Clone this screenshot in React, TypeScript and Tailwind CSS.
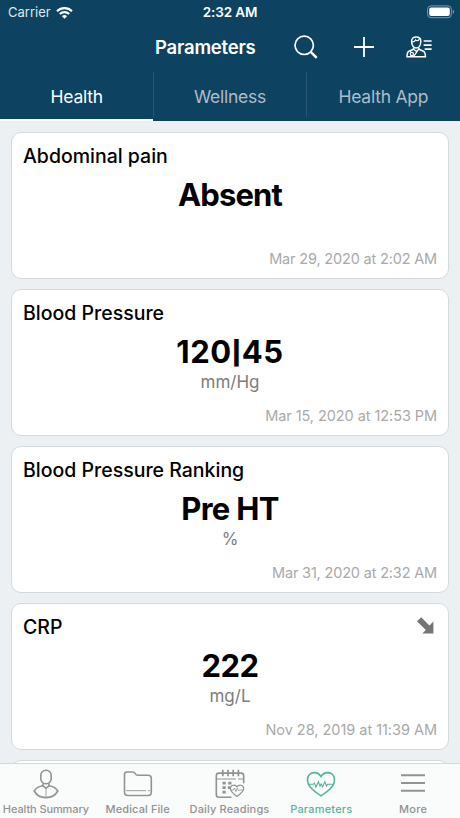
import clsx from "clsx"
import type { ReactNode } from "react"

type Reading = {
    title: string
    value: ReactNode
    unit?: string
    date: string
    falling?: boolean
    valueClass: string
    dateClass: string
}

const READINGS: Reading[] = [
    {
        title: "Abdominal pain", value: "Absent", date: "Mar 29, 2020 at 2:02 AM",
        valueClass: "tracking-[-0.9px]", dateClass: "tracking-[-0.17px]",
    },
    {
        title: "Blood Pressure", value: <>120<span className="relative -top-[2px] text-[23px] font-black">|</span>45</>, unit: "mm/Hg", date: "Mar 15, 2020 at 12:53 PM",
        valueClass: "tracking-[0.6px]", dateClass: "tracking-[-0.07px]",
    },
    {
        title: "Blood Pressure Ranking", value: "Pre HT", unit: "%", date: "Mar 31, 2020 at 2:32 AM",
        valueClass: "tracking-[-0.7px]", dateClass: "tracking-[-0.17px]",
    },
    {
        title: "CRP", value: "222", unit: "mg/L", date: "Nov 28, 2019 at 11:39 AM", falling: true,
        valueClass: "tracking-[-0.5px]", dateClass: "tracking-[-0.03px]",
    },
]

function WifiIcon() {
    return (
        <svg width="17" height="12" viewBox="0 0 17 12" fill="none" stroke="currentColor" strokeWidth="2.1">
            <path d="M1 4.2a10.6 10.6 0 0 1 15 0" />
            <path d="M3.8 7.1a6.7 6.7 0 0 1 9.4 0" />
            <path d="M8.5 11.8 5.9 9.3a3.7 3.7 0 0 1 5.2 0z" fill="currentColor" stroke="none" />
        </svg>
    )
}

function BatteryIcon() {
    return (
        <svg width="28" height="14" viewBox="0 0 28 14" fill="none">
            <rect x="0.6" y="0.9" width="23.8" height="11.8" rx="3.4" stroke="#7b9aaf" strokeWidth="1" />
            <rect x="2.2" y="2.5" width="20.6" height="8.6" rx="2" fill="#fff" />
            <path d="M25.8 4.8v4q1.4-.6 1.4-2t-1.4-2z" fill="#7b9aaf" />
        </svg>
    )
}

function SearchIcon() {
    return (
        <svg width="24" height="24" viewBox="0 0 24 24" fill="none" stroke="currentColor">
            <circle cx="10.2" cy="10.3" r="9.2" strokeWidth="1.7" />
            <path d="m16.5 16.7 6.2 6.1" strokeWidth="2.4" />
        </svg>
    )
}

function PlusIcon() {
    return (
        <svg width="20" height="20" viewBox="0 0 20 20" fill="none" stroke="currentColor" strokeWidth="1.8">
            <path d="M10 0v20M0 10h20" />
        </svg>
    )
}

function DoctorIcon() {
    return (
        <svg width="26" height="22" viewBox="0 0 26 22" fill="none" stroke="currentColor" strokeWidth="1.5">
            <path d="M5.6 5.2C5.600 2.300 7.500.9 10.200.9s4.600 1.600 4.600 4.300c0 3.900-1.900 6.900-4.600 6.900S5.600 9.100 5.600 5.200z" />
            <path d="M6 5.800c2.200.1 3-.7 3.500-1.900 1.100 1.300 3 1.100 3.700-.9" strokeWidth="1.2" />
            <path d="M7.500 11.800v1.500L3 15.200C1.500 16 1 17.800 1 20.800h18.400c0-3-.5-4.800-2-5.600l-4.500-1.900v-1.500" />
            <path d="m7.800 13.200 2.500 2.200 2.400-2.200M12.600 13.400 7.700 20.400M4.700 15v1.600" strokeWidth="1.2" />
            <circle cx="5.900" cy="18" r="1.600" strokeWidth="1.200" />
            <path d="M17.600 5h8M17.600 9.100h8M18.700 13.200h6.900" strokeWidth="1.700" />
        </svg>
    )
}

function FallingArrow() {
    return (
        <svg width="17" height="17" viewBox="0 0 17 17" className="fill-[#757575]">
            <path d="M0 4.200 4.200.2l8.200 8.200 4-3.800v12H5.300l3.500-3.700z" />
        </svg>
    )
}

function PersonIcon() {
    return (
        <svg width="26" height="30" viewBox="0 0 26 30" fill="none" stroke="currentColor" strokeWidth="1.6">
            <rect x="7.800" y="1.300" width="10.400" height="13.400" rx="5" />
            <path d="M10 14.500v2.300c-3.800.5-7 2.400-8.800 5.200 2.300 4.200 6.700 6.600 11.800 6.600s9.500-2.400 11.800-6.600c-1.800-2.800-5-4.700-8.800-5.200v-2.300" />
            <path d="m9.800 16.700 3.200 2.600 3.200-2.600" />
            <path d="M13 19.300v9" strokeWidth=".8" />
        </svg>
    )
}

function FolderIcon() {
    return (
        <svg width="30" height="28" viewBox="0 0 30 28" fill="none" stroke="currentColor" strokeWidth="1.6">
            <path d="M1.500 4.500c0-1.500.8-2.500 2.500-2.500h6c2.500 0 2 3.300 4.500 3.300H25c2.300 0 3.300 1 3.300 3V22c0 2.500-1 3.500-3.300 3.500H4.800c-2.300 0-3.300-1-3.300-3.500z" />
            <path d="M3 20.700h20M24.800 20.700h2" strokeWidth=".9" />
        </svg>
    )
}

function CalendarIcon() {
    return (
        <svg width="30" height="30" viewBox="0 0 30 30" fill="none" stroke="currentColor" strokeWidth="1.6" className="ml-px">
            <path d="M16.500 28.200H4c-1.800 0-2.700-.9-2.700-2.700V6.700C1.300 5 2.200 4.100 4 4.100h22c1.800 0 2.700.9 2.700 2.600v7.500" />
            <path d="M1.300 10H21M23 10h5.500" strokeWidth="1.200" />
            <path d="M7.800.8v6.500M13 .8v6.500M18.200.8v6.500M23.400.8v6.500" strokeWidth="1.700" />
            <path d="M7.500 14.200h3.200M13.200 14.200h3.200M7.500 18.700h3.200M12.800 18.700h2.500M7.500 23.200h3.200" strokeWidth="2.700" />
            <path d="M22 27.500c-3.800-2.700-6.700-4.900-6.700-7.900 0-3.700 4.700-4.700 6.700-1.700 2-3 6.700-2 6.700 1.700 0 3-2.900 5.200-6.700 7.900z" strokeWidth="1.200" />
            <path d="M15.500 21h3l1-2 1.300 3.700 1.500-3.700 1.300 3 1-1h3.500" strokeWidth=".8" />
        </svg>
    )
}

function HeartIcon() {
    return (
        <svg width="30" height="27" viewBox="0 0 30 27" fill="none" stroke="currentColor" strokeWidth="1.6">
            <path d="M15 24.800C8.500 20.500 1.500 15.700 1.500 8.900 1.500 4.300 4.500 1.600 8.300 1.600c3 0 5.200 1.300 6.700 4 1.500-2.700 3.700-4 6.700-4 3.800 0 6.800 2.700 6.800 7.300 0 6.800-7 11.600-13.500 15.900z" />
            <path d="M3 13.300h4.300l1.100-1.200 1.600 3.900 2.400-5.200 1.600 4.300 1.200-2.200 1.400 3 2.200-5.200 1.700 4.300 1.100-1.700h5.700" strokeWidth="1.100" />
        </svg>
    )
}

function MenuIcon() {
    return (
        <svg width="24" height="20" viewBox="0 0 24 20" fill="none" stroke="currentColor" strokeWidth="1.900" className="-mt-[3px]">
            <path d="M0 2.300h24M0 10h24M0 17.700h24" />
        </svg>
    )
}

function ReadingCard({ reading }: { reading: Reading }) {
    return (
        <article className="flex h-[147px] shrink-0 flex-col rounded-[10px] border border-[#d5d9dc] bg-white px-[11px] pt-[9px] pb-[9px]">
            <header className="flex h-7 items-center justify-between">
                <h2 className="text-[19.5px] leading-7 font-medium whitespace-nowrap text-black">{reading.title}</h2>
                {reading.falling && <span className="mr-[3px] mb-1"><FallingArrow /></span>}
            </header>
            <p className={clsx("mt-[5px] h-10 text-center text-[31px] leading-10 font-bold whitespace-nowrap text-black", reading.valueClass)}>{reading.value}</p>
            <p className="h-5 text-center text-[17px] leading-5 text-[#7d7d7d]">{reading.unit}</p>
            <time className={clsx("mt-auto text-right text-[14.5px] leading-5 whitespace-nowrap text-[#a9a9a9]", reading.dateClass)}>{reading.date}</time>
        </article>
    )
}

function NavItem({ label, labelClass, active, children }: { label: string, labelClass?: string, active?: boolean, children: ReactNode }) {
    return (
        <button className={clsx("flex flex-col items-center", active ? "text-[#55b49c]" : "text-[#929292]")}>
            <span className="flex h-[37px] items-center justify-center pt-[3px]">{children}</span>
            <span className={clsx("text-[11px] leading-4 font-medium whitespace-nowrap", labelClass)}>{label}</span>
        </button>
    )
}

export default function App() {
    return (
        <div className="flex h-[818px] w-[460px] flex-col overflow-hidden bg-[#edf0f3] font-['Inter',sans-serif]">
            <header className="flex h-[121px] shrink-0 flex-col bg-[#0e4261] text-white">
                <div className="grid h-6 grid-cols-3 items-center pr-[5px] pl-2">
                    <span className="flex items-center gap-[5px] pt-px text-[13px] text-[#dfe8ee]">Carrier <span className="text-white"><WifiIcon /></span></span>
                    <span className="pr-[3px] text-center text-[13.5px] font-semibold tracking-[-0.1px]">2:32 AM</span>
                    <span className="flex justify-end"><BatteryIcon /></span>
                </div>
                <div className="flex h-[46px] items-center pr-[28px] pl-[155px]">
                    <h1 className="w-[139px] pt-[2px] text-[18.5px] font-semibold tracking-[-0.2px]">Parameters</h1>
                    <button><SearchIcon /></button>
                    <button className="ml-9"><PlusIcon /></button>
                    <button className="ml-auto"><DoctorIcon /></button>
                </div>
                <nav className="mt-[2px] grid h-[49px] grid-cols-3 text-[17.5px] tracking-[-0.25px] text-[#adbdc9]">
                    <button className="border-b-2 border-white pt-[3px] text-white">Health</button>
                    <button className="mb-[4px] border-x border-[#285673] pt-[6px]">Wellness</button>
                    <button className="mb-[4px] pt-[6px]">Health App</button>
                </nav>
            </header>

            <main className="flex min-h-0 flex-1 flex-col gap-[10px] overflow-hidden px-[11px] pt-[11px]">
                {READINGS.map(reading => <ReadingCard key={reading.title} reading={reading} />)}
                <div className="h-10 shrink-0 rounded-[10px] border border-[#d5d9dc] bg-white" />
            </main>

            <nav className="grid h-[55px] shrink-0 grid-cols-5 border-t border-[#d4d8da] bg-[#fafbfb] pr-px">
                <NavItem label="Health Summary" labelClass="tracking-[-0.1px]"><PersonIcon /></NavItem>
                <NavItem label="Medical File" labelClass="tracking-[0.1px]"><FolderIcon /></NavItem>
                <NavItem label="Daily Readings" labelClass="tracking-[0.15px]"><CalendarIcon /></NavItem>
                <NavItem label="Parameters" labelClass="tracking-[0.2px]" active><HeartIcon /></NavItem>
                <NavItem label="More" labelClass="tracking-[0.2px]"><MenuIcon /></NavItem>
            </nav>
        </div>
    )
}
